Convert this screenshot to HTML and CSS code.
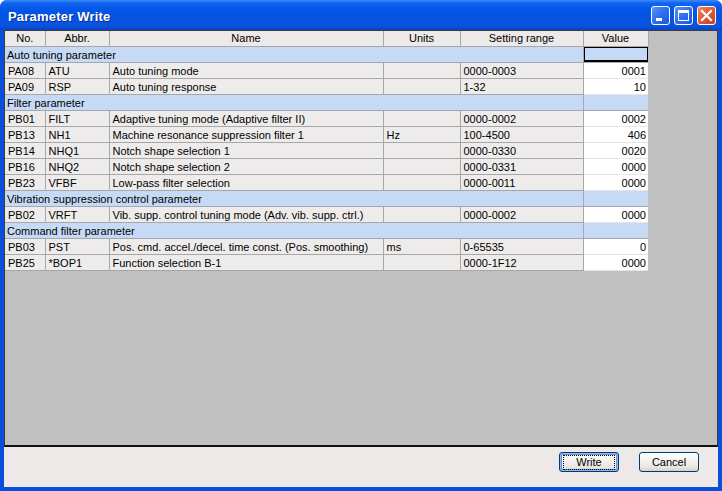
FILE: index.html
```html
<!DOCTYPE html>
<html>
<head>
<meta charset="utf-8">
<link rel="stylesheet" href="styles.css">
</head>
<body>
<div class="window">
  <div class="titlebar">
    <div class="title">Parameter Write</div>
    <div class="tbtns">
      <div class="tbtn"><svg width="19" height="19" viewBox="0 0 19 19"><rect x="5" y="12" width="6" height="3" fill="#fff"/></svg></div>
      <div class="tbtn"><svg width="19" height="19" viewBox="0 0 19 19"><rect x="4.5" y="4.5" width="10" height="10" fill="none" stroke="#fff" stroke-width="1"/><rect x="4" y="4" width="11" height="3" fill="#fff"/></svg></div>
      <div class="tbtn close"><svg width="19" height="19" viewBox="0 0 19 19"><path d="M5 5 L14 14 M14 5 L5 14" stroke="#fff" stroke-width="2.2" stroke-linecap="square"/></svg></div>
    </div>
  </div>
  <div class="client">
    <div class="gridarea">
      <table class="grid">
        <colgroup>
          <col class="c-no"><col class="c-abbr"><col class="c-name"><col class="c-units"><col class="c-range"><col class="c-val">
        </colgroup>
        <thead>
          <tr><th>No.</th><th>Abbr.</th><th>Name</th><th>Units</th><th>Setting range</th><th>Value</th></tr>
        </thead>
        <tbody>
          <tr class="grp"><td colspan="5">Auto tuning parameter</td><td class="val sel"></td></tr>
          <tr><td>PA08</td><td>ATU</td><td>Auto tuning mode</td><td></td><td>0000-0003</td><td class="val">0001</td></tr>
          <tr><td>PA09</td><td>RSP</td><td>Auto tuning response</td><td></td><td>1-32</td><td class="val">10</td></tr>
          <tr class="grp"><td colspan="5">Filter parameter</td><td class="val"></td></tr>
          <tr><td>PB01</td><td>FILT</td><td>Adaptive tuning mode (Adaptive filter II)</td><td></td><td>0000-0002</td><td class="val">0002</td></tr>
          <tr><td>PB13</td><td>NH1</td><td>Machine resonance suppression filter 1</td><td>Hz</td><td>100-4500</td><td class="val">406</td></tr>
          <tr><td>PB14</td><td>NHQ1</td><td>Notch shape selection 1</td><td></td><td>0000-0330</td><td class="val">0020</td></tr>
          <tr><td>PB16</td><td>NHQ2</td><td>Notch shape selection 2</td><td></td><td>0000-0331</td><td class="val">0000</td></tr>
          <tr><td>PB23</td><td>VFBF</td><td>Low-pass filter selection</td><td></td><td>0000-0011</td><td class="val">0000</td></tr>
          <tr class="grp"><td colspan="5">Vibration suppression control parameter</td><td class="val"></td></tr>
          <tr><td>PB02</td><td>VRFT</td><td>Vib. supp. control tuning mode (Adv. vib. supp. ctrl.)</td><td></td><td>0000-0002</td><td class="val">0000</td></tr>
          <tr class="grp"><td colspan="5">Command filter parameter</td><td class="val"></td></tr>
          <tr><td>PB03</td><td>PST</td><td>Pos. cmd. accel./decel. time const. (Pos. smoothing)</td><td>ms</td><td>0-65535</td><td class="val">0</td></tr>
          <tr><td>PB25</td><td>*BOP1</td><td>Function selection B-1</td><td></td><td>0000-1F12</td><td class="val">0000</td></tr>
        </tbody>
      </table>
    </div>
    <div class="footer">
      <button class="btn focus"><span>Write</span></button>
      <button class="btn"><span>Cancel</span></button>
    </div>
  </div>
</div>
</body>
</html>
```
FILE: styles.css
```css
* { box-sizing: border-box; }
html, body { margin: 0; padding: 0; background: #ffffff; }
body { font-family: "Liberation Sans", Arial, sans-serif; font-size: 11px; color: #000; }

.window {
  width: 722px;
  height: 491px;
  display: flex;
  flex-direction: column;
  background: #0a4fdc;
  border-radius: 7px 7px 0 0;
  overflow: hidden;
}

.titlebar {
  height: 30px;
  flex: none;
  display: flex;
  align-items: center;
  justify-content: space-between;
  padding: 0 6px 0 8px;
  background: linear-gradient(to bottom, #3b8cf8 0%, #1265f0 10%, #0456e8 30%, #0553e2 60%, #0a54e0 85%, #0843c7 100%);
}
.title {
  color: #fff;
  font-weight: bold;
  font-size: 13px;
  letter-spacing: 0.2px;
  text-shadow: 1px 1px 0 #0a2a8a;
  padding-top: 3px;
}
.tbtns { display: flex; gap: 4px; padding-top: 1px; }
.tbtn {
  width: 19px;
  height: 19px;
  border: 1px solid #fff;
  border-radius: 3px;
  background: linear-gradient(135deg, #5b93fb 0%, #2e6ff0 50%, #1a56e0 100%);
  display: flex;
  overflow: hidden;
}
.tbtn svg { margin: -1px; flex: none; }
.tbtn.close { background: linear-gradient(135deg, #ea8a6c 0%, #de5a34 50%, #c9431c 100%); }

.client {
  flex: 1;
  display: flex;
  flex-direction: column;
  margin: 0 4px 4px 4px;
  background: #ece9e8;
}

.gridarea {
  height: 417px;
  flex: none;
  background: #c0c0c0;
  border: 1px solid #3c3c3c;
  border-bottom: 2px solid #111;
  overflow: hidden;
}

.grid {
  border-collapse: collapse;
  table-layout: fixed;
  width: 643px;
}
.c-no { width: 40px; }
.c-abbr { width: 64px; }
.c-name { width: 274px; }
.c-units { width: 77px; }
.c-range { width: 123px; }
.c-val { width: 65px; }

.grid th {
  height: 15px;
  padding: 1px 0 0 0;
  font-weight: normal;
  text-align: center;
  background: #ece9e8;
  border-right: 1px solid #a7a6aa;
  border-bottom: 1px solid #a7a6aa;
  line-height: 13px;
}
.grid td {
  height: 16px;
  padding: 1px 0 0 3px;
  line-height: 14px;
  background: #eeeceb;
  border-right: 1px solid #a7a6aa;
  border-bottom: 1px solid #a7a6aa;
  white-space: nowrap;
  overflow: hidden;
}
.grid td.val {
  background: #fff;
  text-align: right;
  padding: 1px 2px 0 0;
  border-bottom-color: #e6e6e6;
  border-right: none;
}
.grid tr.grp td {
  background: #c6daf5;
  padding-left: 2px;
  border-bottom-color: #a7a6aa;
}
.grid tr.grp td.val {
  background: #c6daf5;
  border-left: 1px solid #ffffff;
}
.grid td.sel {
  box-shadow: inset 0 0 0 1px #000, inset 0 -2px 0 #000;
}

.footer {
  flex: 1;
  display: flex;
  justify-content: flex-end;
  align-items: flex-start;
  gap: 20px;
  padding: 5px 19px 0 0;
}
.btn {
  width: 60px;
  height: 20px;
  padding: 0;
  border: 1px solid #003c74;
  border-radius: 3px;
  background: linear-gradient(to bottom, #ffffff 0%, #f4f3ee 40%, #e6e5e0 80%, #d6d0c5 100%);
  font-family: "Liberation Sans", Arial, sans-serif;
  font-size: 11px;
  color: #000;
  display: flex;
  align-items: center;
  justify-content: center;
}
.btn span { display: block; line-height: 13px; }
.btn.focus {
  box-shadow: inset 0 0 0 1px #99b6ee, inset 0 0 0 2px #6d8fe0;
}
.btn.focus span {
  outline: 1px dotted #000;
  width: 50px;
  text-align: center;
}
```
